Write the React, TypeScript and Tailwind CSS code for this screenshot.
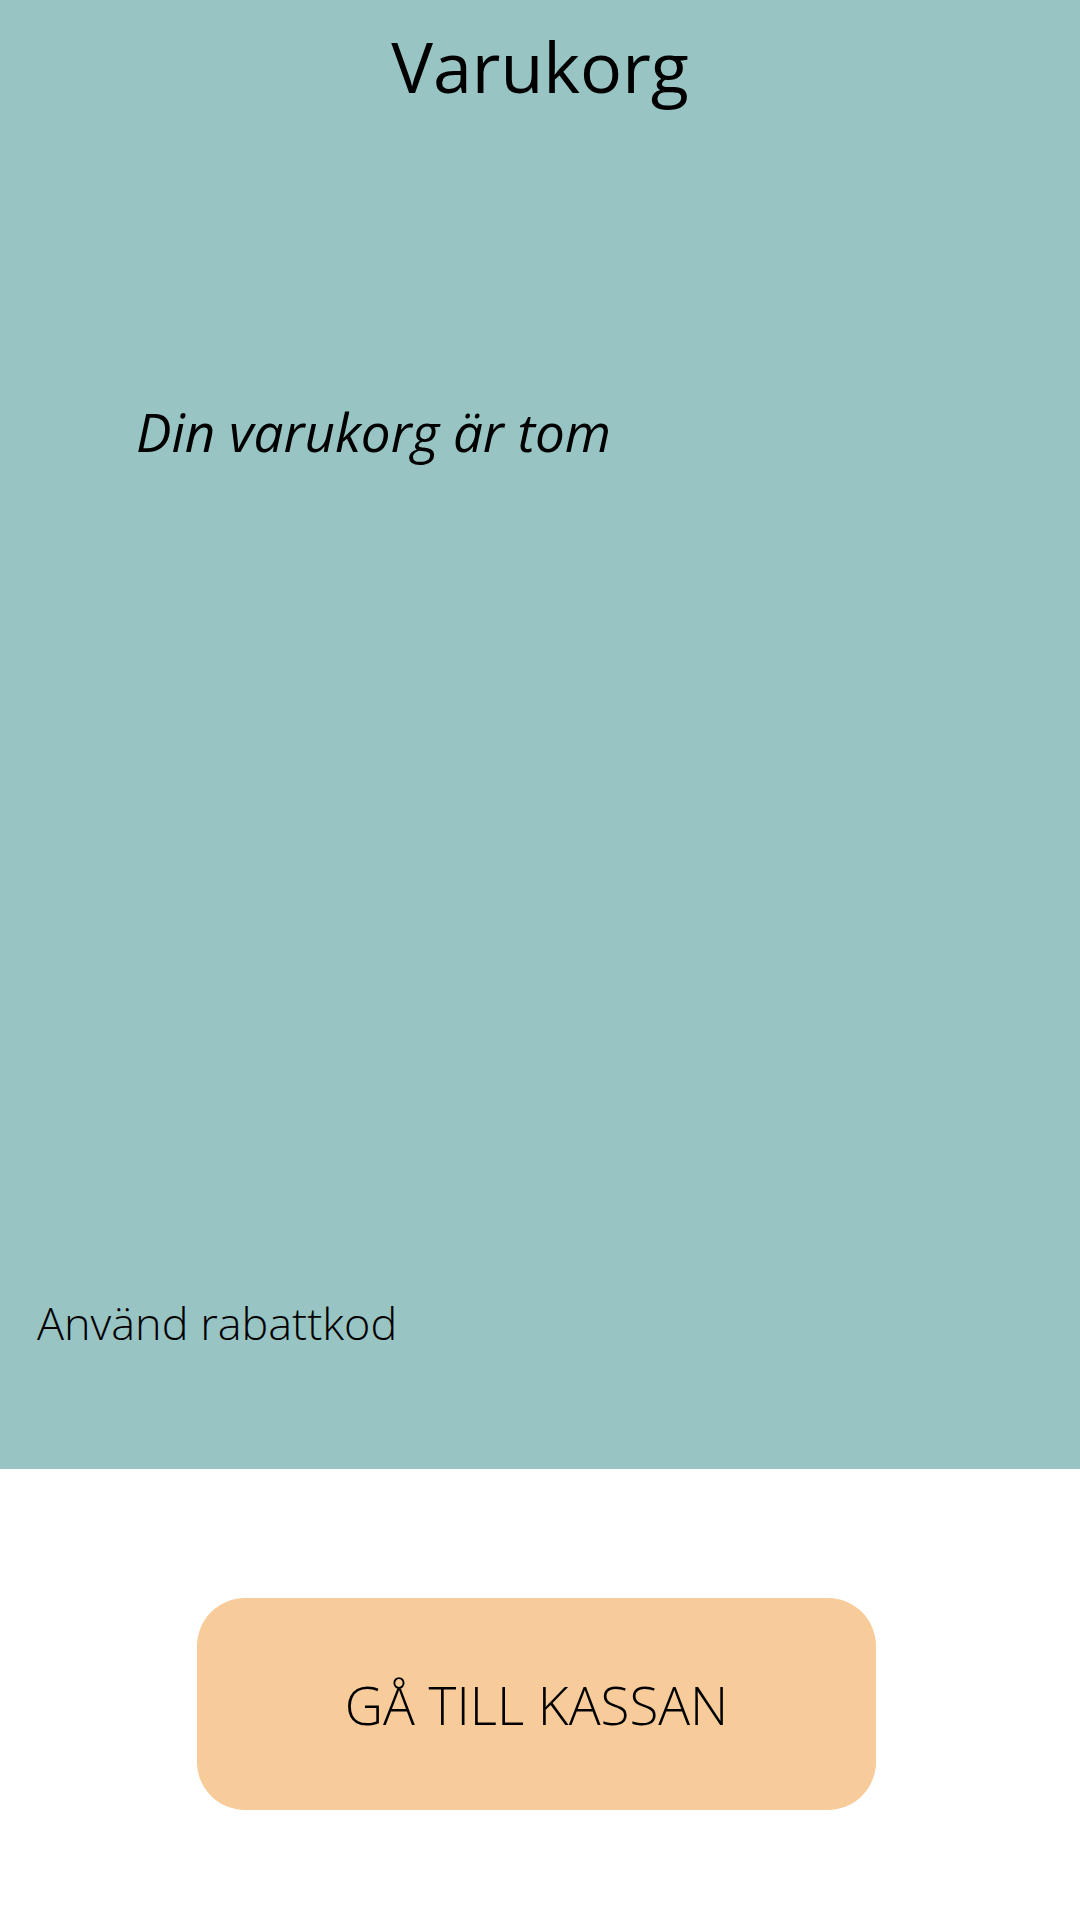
export default function App() {
  return (
    <div className="w-[1080px] h-[1920px] bg-white font-['Open_Sans',sans-serif] text-black">
      <section className="h-[1469px] bg-[#98c4c3] flex flex-col">
        <h1 className="pt-[31px] text-center text-[70px] leading-none font-normal">Varukorg</h1>
        <p className="mt-[304px] pl-[136px] text-[53px] leading-none italic">Din varukorg är tom</p>
        <button className="mt-auto mb-[124px] pl-[37px] text-left text-[45px] leading-none font-light">
          Använd rabattkod
        </button>
      </section>
      <div className="pt-[129px]">
        <button className="ml-[197px] w-[679px] h-[212px] rounded-[48px] bg-[#f8cb9b] text-[53px] font-light leading-none">
          GÅ TILL KASSAN
        </button>
      </div>
    </div>
  );
}
